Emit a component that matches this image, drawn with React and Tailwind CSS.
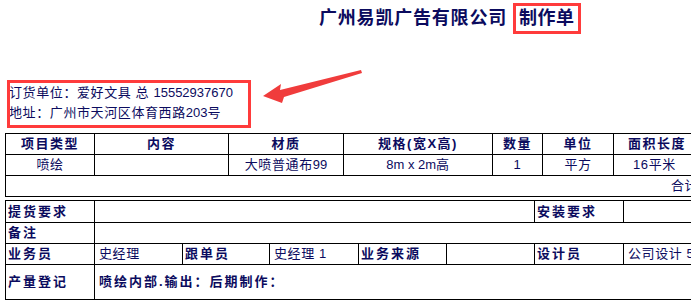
import React from 'react';

const td = 'border border-black p-0';

const InfoTable = () => (
    <table className="table-fixed border-collapse ml-[5px] w-[800px]">
        <colgroup>
            <col className="w-[89px]" />
            <col className="w-[134px]" />
            <col className="w-[115px]" />
            <col className="w-[149px]" />
            <col className="w-[50px]" />
            <col className="w-[71px]" />
            <col className="w-[92px]" />
            <col className="w-[100px]" />
        </colgroup>
        <thead>
            <tr className="h-[21px] text-[13px] font-bold tracking-[1.5px]">
                <th className={td}>项目类型</th>
                <th className={td}>内容</th>
                <th className={td}>材质</th>
                <th className={td}>规格(宽X高)</th>
                <th className={td}>数量</th>
                <th className={td}>单位</th>
                <th className={td + ' text-left pl-[14px]'}>面积长度</th>
                <th className={td}>单价</th>
            </tr>
        </thead>
        <tbody className="text-[13px] tracking-[0.6px] text-center">
            <tr className="h-[21px]">
                <td className={td}>喷绘</td>
                <td className={td}></td>
                <td className={td}>大喷普通布<span className="tracking-normal">99</span></td>
                <td className={td}><span className="tracking-normal">8m x 2m</span>高</td>
                <td className={td}>1</td>
                <td className={td}>平方</td>
                <td className={td + ' text-left pl-[19px]'}>16平米</td>
                <td className={td}></td>
            </tr>
            <tr className="h-[21px]">
                {/* 合计 sits far right, most of it is off the page */}
                <td colSpan="8" className={td + ' text-left pl-[665px]'}>合计：</td>
            </tr>
        </tbody>
    </table>
);

const OrderTable = () => {
    const label = td + ' text-left pl-[2px] font-bold tracking-[2px]';
    const value = td + ' text-left pl-[4px] tracking-[0.6px]';
    return (
        <table className="table-fixed border-collapse ml-[5px] mt-[3px] w-[707px] text-[13px]">
            <colgroup>
                <col className="w-[89px]" />
                <col className="w-[88px]" />
                <col className="w-[87px]" />
                <col className="w-[89px]" />
                <col className="w-[88px]" />
                <col className="w-[88px]" />
                <col className="w-[89px]" />
                <col className="w-[89px]" />
            </colgroup>
            <tbody>
                <tr className="h-[22px]">
                    <td className={label}>提货要求</td>
                    <td colSpan="5" className={value}></td>
                    <td className={label}>安装要求</td>
                    <td className={value}></td>
                </tr>
                <tr className="h-[20px]">
                    <td className={label}>备注</td>
                    <td colSpan="7" className={value}></td>
                </tr>
                <tr className="h-[21px]">
                    <td className={label}>业务员</td>
                    <td className={value}>史经理</td>
                    <td className={label}>跟单员</td>
                    <td className={value}>史经理 1</td>
                    <td className={label}>业务来源</td>
                    <td className={value}></td>
                    <td className={label}>设计员</td>
                    <td className={value + ' whitespace-nowrap'}>公司设计 5</td>
                </tr>
                <tr className="h-[35px]">
                    <td className={label}>产量登记</td>
                    <td colSpan="7" className={value + ' font-bold tracking-[2px]'}>喷绘内部.输出：后期制作：</td>
                </tr>
            </tbody>
        </table>
    );
};

const App = () => {
    return (
        <div className="relative w-[691px] h-[304px] overflow-hidden bg-white text-[#0b0b5e] font-[family-name:Liberation_Sans,Noto_Sans_CJK_SC,sans-serif]">
            {/* title */}
            <div className="flex items-start h-[83px] pl-[319px] pt-[3px]">
                <span className="text-[18px] font-bold tracking-[0.8px] leading-[31px]">广州易凯广告有限公司</span>
                <span className="ml-[6px] border-[3px] border-[#ff3b3b] px-[3px] text-[18px] font-bold tracking-[0.5px] leading-[25px]">制作单</span>
            </div>

            {/* customer info */}
            <div className="pl-[9px] text-[13px] leading-[20px] tracking-[0.6px]">
                <div>订货单位：爱好文具 总 <span className="tracking-normal">15552937670</span></div>
                <div>地址：广州市天河区体育西路<span className="tracking-normal">203</span>号</div>
            </div>

            <div className="mt-[10px]">
                <InfoTable />
                <OrderTable />
            </div>

            {/* annotation: red box + arrow */}
            <div className="absolute left-[7px] top-[80px] w-[244px] h-[48px] border-[3px] border-[#ff3b3b] pointer-events-none" />
            <svg className="absolute left-0 top-0 pointer-events-none" width="691" height="304">
                <polygon
                    points="263,96 281,84 280,90 361,70 362,73 284,97 282,103"
                    fill="#f03c3c"
                />
            </svg>
        </div>
    );
};

export default App;
